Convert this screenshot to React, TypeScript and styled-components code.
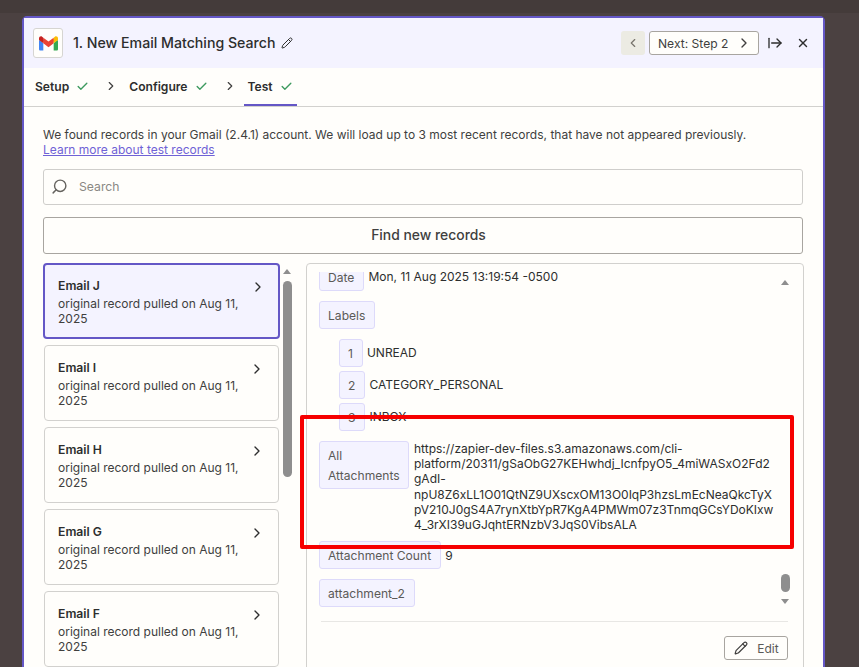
import React from "react";
import styled, { createGlobalStyle } from "styled-components";
import { ArrowRightFromLine, Check, ChevronLeft, ChevronRight, Pencil, Search, X } from "lucide-react";

const Global = createGlobalStyle`
  html, body { margin: 0; padding: 0; height: 667px; overflow: hidden; background: #4b4141; }
  body { font-family: Inter, "Noto Sans", sans-serif; color: #2d2e2e; }
  * { box-sizing: border-box; }
`;

const Page = styled.div`
  position: relative;
  height: 667px;
  overflow: hidden;
  background: #4b4141;
`;
const TopBand = styled.div`
  height: 13px;
  background: #443b3a;
`;
const Modal = styled.div`
  margin: 3px 0 0 22px;
  width: 803px;
  height: 700px;
  background: #fffefb;
  border: 2px solid #6457c6;
  border-radius: 5px 5px 0 0;
  display: flex;
  flex-direction: column;
`;
const Header = styled.header`
  height: 50px;
  flex: none;
  background: #f4f3ff;
  display: flex;
  align-items: center;
  padding: 0 13px 0 9px;
`;
const AppIcon = styled.div`
  width: 30px;
  height: 30px;
  border: 1px solid #d6d5d2;
  border-radius: 3px;
  background: #fffefb;
  display: flex;
  align-items: center;
  justify-content: center;
  margin-right: 10px;
`;
const Title = styled.h1`
  margin: 0;
  font-size: 14.15px;
  font-weight: 500;
  color: #2d2e2e;
  line-height: 20px;
`;
const TitlePencil = styled(Pencil)`
  margin-left: 6px;
  width: 12px;
  height: 12px;
  color: #2d2e2e;
`;
const HeaderActions = styled.div`
  margin-left: auto;
  display: flex;
  align-items: center;
`;
const BackButton = styled.div`
  width: 24px;
  height: 24px;
  border-radius: 3px;
  background: #ecebe3;
  color: #77736c;
  display: flex;
  align-items: center;
  justify-content: center;
  margin-right: 4px;
`;
const NextButton = styled.div`
  width: 110px;
  height: 24px;
  border: 1px solid #a8a5a0;
  border-radius: 3px;
  background: #fffefb;
  display: flex;
  align-items: center;
  justify-content: space-between;
  padding: 0 6px 0 8px;
  font-size: 12.1px;
  color: #403f3e;
`;
const ExpandIcon = styled(ArrowRightFromLine)`
  margin-left: 8px;
  width: 16px;
  height: 16px;
  color: #2d2e2e;
`;
const CloseIcon = styled(X)`
  margin-left: 13px;
  width: 14px;
  height: 14px;
  color: #2d2e2e;
`;
const Tabs = styled.nav`
  height: 39px;
  flex: none;
  display: flex;
  align-items: stretch;
  padding-left: 7px;
  border-bottom: 1px solid #d2d1ce;
`;
const Tab = styled.div<{ $active?: boolean }>`
  display: flex;
  align-items: center;
  gap: 7px;
  padding: 1px ${(p) => (p.$active ? 4 : 3)}px 0 4px;
  font-size: 12.1px;
  font-weight: 600;
  color: #2d2e2e;
  border-bottom: 2px solid ${(p) => (p.$active ? "#6457c6" : "transparent")};
`;
const TabSep = styled(ChevronRight)`
  align-self: center;
  margin: 0 7px 2px 12px;
  width: 14px;
  height: 14px;
  color: #403f3e;
`;
const TabCheck = styled(Check)`
  width: 13px;
  height: 13px;
  color: #3d9a5f;
`;
const Content = styled.div`
  flex: 1;
  min-height: 0;
  padding: 20px 20px 0 19px;
`;
const Intro = styled.p`
  margin: 0;
  font-size: 12px;
  line-height: 15px;
  color: #403f3e;
`;
const LearnLink = styled.a`
  color: #6f62d6;
  text-decoration: underline;
  display: block;
`;
const SearchBox = styled.div`
  margin-top: 12px;
  height: 36px;
  border: 1px solid #cfcecb;
  border-radius: 3px;
  display: flex;
  align-items: center;
  padding: 0 0 1px 7px;
  gap: 11px;
  font-size: 12.2px;
  color: #8a8883;
`;
const SearchIcon = styled(Search)`
  width: 17px;
  height: 17px;
  color: #65635f;
  transform: scaleX(-1);
`;
const FindButton = styled.div`
  margin-top: 12px;
  height: 37px;
  border: 1px solid #a8a5a0;
  border-radius: 3px;
  display: flex;
  align-items: center;
  justify-content: center;
  padding: 0 0 1px 11px;
  font-size: 13.9px;
  font-weight: 500;
  color: #403f3e;
`;
const Columns = styled.div`
  margin-top: 9px;
  display: flex;
  align-items: flex-start;
`;
const RecordList = styled.div`
  width: 237px;
  flex: none;
  display: flex;
  flex-direction: column;
  gap: 6px;
`;
const RecordCard = styled.div<{ $selected?: boolean }>`
  height: 76px;
  margin: 0 ${(p) => (p.$selected ? "0" : "1px")};
  border: ${(p) => (p.$selected ? "2px solid #6457c6" : "1px solid #d2d1ce")};
  border-radius: 4px;
  background: ${(p) => (p.$selected ? "#f4f3ff" : "#fffefb")};
  padding: ${(p) => (p.$selected ? "13px 12px 0 13px" : "14px 13px 0 13px")};
  display: flex;
  justify-content: space-between;
  align-items: flex-start;
`;
const RecordText = styled.div`
  width: 190px;
`;
const RecordName = styled.div`
  font-size: 12.2px;
  font-weight: 600;
  line-height: 16px;
  color: #2d2e2e;
`;
const RecordDate = styled.div`
  margin-top: 2px;
  font-size: 12px;
  line-height: 15px;
  color: #403f3e;
`;
const RecordChevron = styled(ChevronRight)`
  margin-top: 1px;
  width: 16px;
  height: 16px;
  color: #2d2e2e;
`;
const ListScroll = styled.div`
  width: 26px;
  flex: none;
  padding: 6px 0 0 3px;
`;
const ArrowUp = styled.div`
  width: 0;
  height: 0;
  border-left: 4.5px solid transparent;
  border-right: 4.5px solid transparent;
  border-bottom: 5px solid #8e8e8e;
`;
const ArrowDown = styled(ArrowUp)`
  border-bottom: none;
  border-top: 5px solid #8e8e8e;
`;
const ListThumb = styled.div`
  width: 9px;
  height: 196px;
  margin-top: 7px;
  border-radius: 5px;
  background: #8e8e8e;
`;
const DetailPanel = styled.section`
  width: 498px;
  height: 420px;
  flex: none;
  border: 1px solid #d2d1ce;
  border-radius: 4px;
  padding: 8px 13px 0 12px;
  display: flex;
  flex-direction: column;
`;
const DetailViewport = styled.div`
  height: 340px;
  flex: none;
  display: flex;
  gap: 6px;
`;
const DetailScrollArea = styled.div`
  flex: 1;
  overflow: hidden;
`;
const DetailRows = styled.div`
  margin-top: -9px;
  display: flex;
  flex-direction: column;
`;
const Row = styled.div<{ $indent?: boolean; $top?: boolean; $after?: number }>`
  display: flex;
  align-items: ${(p) => (p.$top ? "flex-start" : "center")};
  gap: ${(p) => (p.$top ? 5 : 4)}px;
  margin-left: ${(p) => (p.$indent ? 20 : 0)}px;
  margin-bottom: ${(p) => p.$after ?? 10}px;
`;
const Chip = styled.div<{ $w?: number }>`
  flex: none;
  ${(p) => (p.$w ? `width: ${p.$w}px;` : "")}
  padding: 4px 9px 2px 8px;
  background: #f4f3ff;
  border: 1px solid #dddafa;
  border-radius: 3px;
  font-size: 12.1px;
  line-height: 20px;
  color: #5b5a57;
`;
const Value = styled.div`
  font-size: 12px;
  line-height: 15.2px;
  color: #2d2e2e;
`;
const UrlValue = styled(Value)`
  width: 361px;
  overflow-wrap: anywhere;
`;
const DetailScroll = styled.div`
  width: 9px;
  height: 332px;
  flex: none;
  display: flex;
  flex-direction: column;
  padding-top: 8px;
`;
const DetailThumb = styled.div`
  width: 9px;
  height: 18px;
  margin-top: auto;
  border-radius: 5px;
  background: #8e8e8e;
`;
const DetailArrowDown = styled(ArrowDown)`
  margin-top: 7px;
`;
const PanelFooter = styled.div`
  margin: 9px 2px 0 2px;
  border-top: 1px solid #e8e7e4;
  padding-top: 14px;
  display: flex;
  justify-content: flex-end;
`;
const EditButton = styled.div`
  width: 64px;
  height: 24px;
  border: 1px solid #a8a5a0;
  border-radius: 3px;
  display: flex;
  align-items: center;
  justify-content: center;
  gap: 9px;
  padding-left: 1px;
  font-size: 12px;
  color: #5b5a57;
`;
const EditPencil = styled(Pencil)`
  width: 14px;
  height: 14px;
  color: #403f3e;
`;
const Highlight = styled.div`
  position: absolute;
  left: 300px;
  top: 415px;
  width: 494px;
  height: 134px;
  border: 4px solid #f60000;
  border-radius: 2px;
  pointer-events: none;
`;

const GmailLogo = () => (
  <svg width="19" height="15" viewBox="0 0 256 193" aria-hidden="true">
    <path fill="#4285F4" d="M58.18 192.05V93.14L27.51 65.08 0 49.5v125.1c0 9.66 7.83 17.45 17.45 17.45z" />
    <path fill="#34A853" d="M197.82 192.05h40.73c9.65 0 17.45-7.83 17.45-17.45V49.5l-31.16 17.84-27.02 25.8z" />
    <path fill="#EA4335" d="M58.18 93.14l-4.17-38.65 4.17-36.99L128 69.87l69.82-52.37 4.67 35-4.67 40.64L128 145.5z" />
    <path fill="#FBBC04" d="M197.82 17.5v75.64L256 49.5V26.23c0-21.59-24.64-33.89-41.89-20.95z" />
    <path fill="#C5221F" d="M0 49.5l26.76 20.07L58.18 93.14V17.5L41.89 5.28C24.61-7.66 0 4.64 0 26.23z" />
  </svg>
);

const records = ["Email J", "Email I", "Email H", "Email G", "Email F"];
const url =
  "https://zapier-dev-files.s3.amazonaws.com/cli-platform/20311/gSaObG27KEHwhdj_IcnfpyO5_4miWASxO2Fd2gAdI-npU8Z6xLL1O01QtNZ9UXscxOM13O0IqP3hzsLmEcNeaQkcTyXpV210J0gS4A7rynXtbYpR7KgA4PMWm07z3TnmqGCsYDoKIxw4_3rXI39uGJqhtERNzbV3JqS0VibsALA";

export default function App() {
  return (
    <Page>
      <Global />
      <TopBand />
      <Modal>
        <Header>
          <AppIcon>
            <GmailLogo />
          </AppIcon>
          <Title>1. New Email Matching Search</Title>
          <TitlePencil strokeWidth={2} />
          <HeaderActions>
            <BackButton>
              <ChevronLeft size={14} />
            </BackButton>
            <NextButton>
              Next: Step 2
              <ChevronRight size={16} />
            </NextButton>
            <ExpandIcon strokeWidth={2} />
            <CloseIcon strokeWidth={2.5} />
          </HeaderActions>
        </Header>
        <Tabs>
          <Tab>
            Setup <TabCheck strokeWidth={2.5} />
          </Tab>
          <TabSep />
          <Tab>
            Configure <TabCheck strokeWidth={2.5} />
          </Tab>
          <TabSep />
          <Tab $active>
            Test <TabCheck strokeWidth={2.5} />
          </Tab>
        </Tabs>
        <Content>
          <Intro>
            We found records in your Gmail (2.4.1) account. We will load up to 3 most recent records, that have not appeared previously.
            <LearnLink>Learn more about test records</LearnLink>
          </Intro>
          <SearchBox>
            <SearchIcon />
            Search
          </SearchBox>
          <FindButton>Find new records</FindButton>
          <Columns>
            <RecordList>
              {records.map((name, i) => (
                <RecordCard key={name} $selected={i === 0}>
                  <RecordText>
                    <RecordName>{name}</RecordName>
                    <RecordDate>original record pulled on Aug 11, 2025</RecordDate>
                  </RecordText>
                  <RecordChevron />
                </RecordCard>
              ))}
            </RecordList>
            <ListScroll>
              <ArrowUp />
              <ListThumb />
            </ListScroll>
            <DetailPanel>
              <DetailViewport>
                <DetailScrollArea>
                  <DetailRows>
                    <Row>
                      <Chip>Date</Chip>
                      <Value>Mon, 11 Aug 2025 13:19:54 -0500</Value>
                    </Row>
                    <Row>
                      <Chip>Labels</Chip>
                    </Row>
                    <Row $indent $after={4}>
                      <Chip>1</Chip>
                      <Value>UNREAD</Value>
                    </Row>
                    <Row $indent $after={4}>
                      <Chip>2</Chip>
                      <Value>CATEGORY_PERSONAL</Value>
                    </Row>
                    <Row $indent>
                      <Chip>3</Chip>
                      <Value>INBOX</Value>
                    </Row>
                    <Row $top $after={9}>
                      <Chip $w={90}>All Attachments</Chip>
                      <UrlValue>{url}</UrlValue>
                    </Row>
                    <Row>
                      <Chip>Attachment Count</Chip>
                      <Value>9</Value>
                    </Row>
                    <Row>
                      <Chip>attachment_2</Chip>
                    </Row>
                  </DetailRows>
                </DetailScrollArea>
                <DetailScroll>
                  <ArrowUp />
                  <DetailThumb />
                  <DetailArrowDown />
                </DetailScroll>
              </DetailViewport>
              <PanelFooter>
                <EditButton>
                  <EditPencil />
                  Edit
                </EditButton>
              </PanelFooter>
            </DetailPanel>
          </Columns>
        </Content>
      </Modal>
      <Highlight />
    </Page>
  );
}
